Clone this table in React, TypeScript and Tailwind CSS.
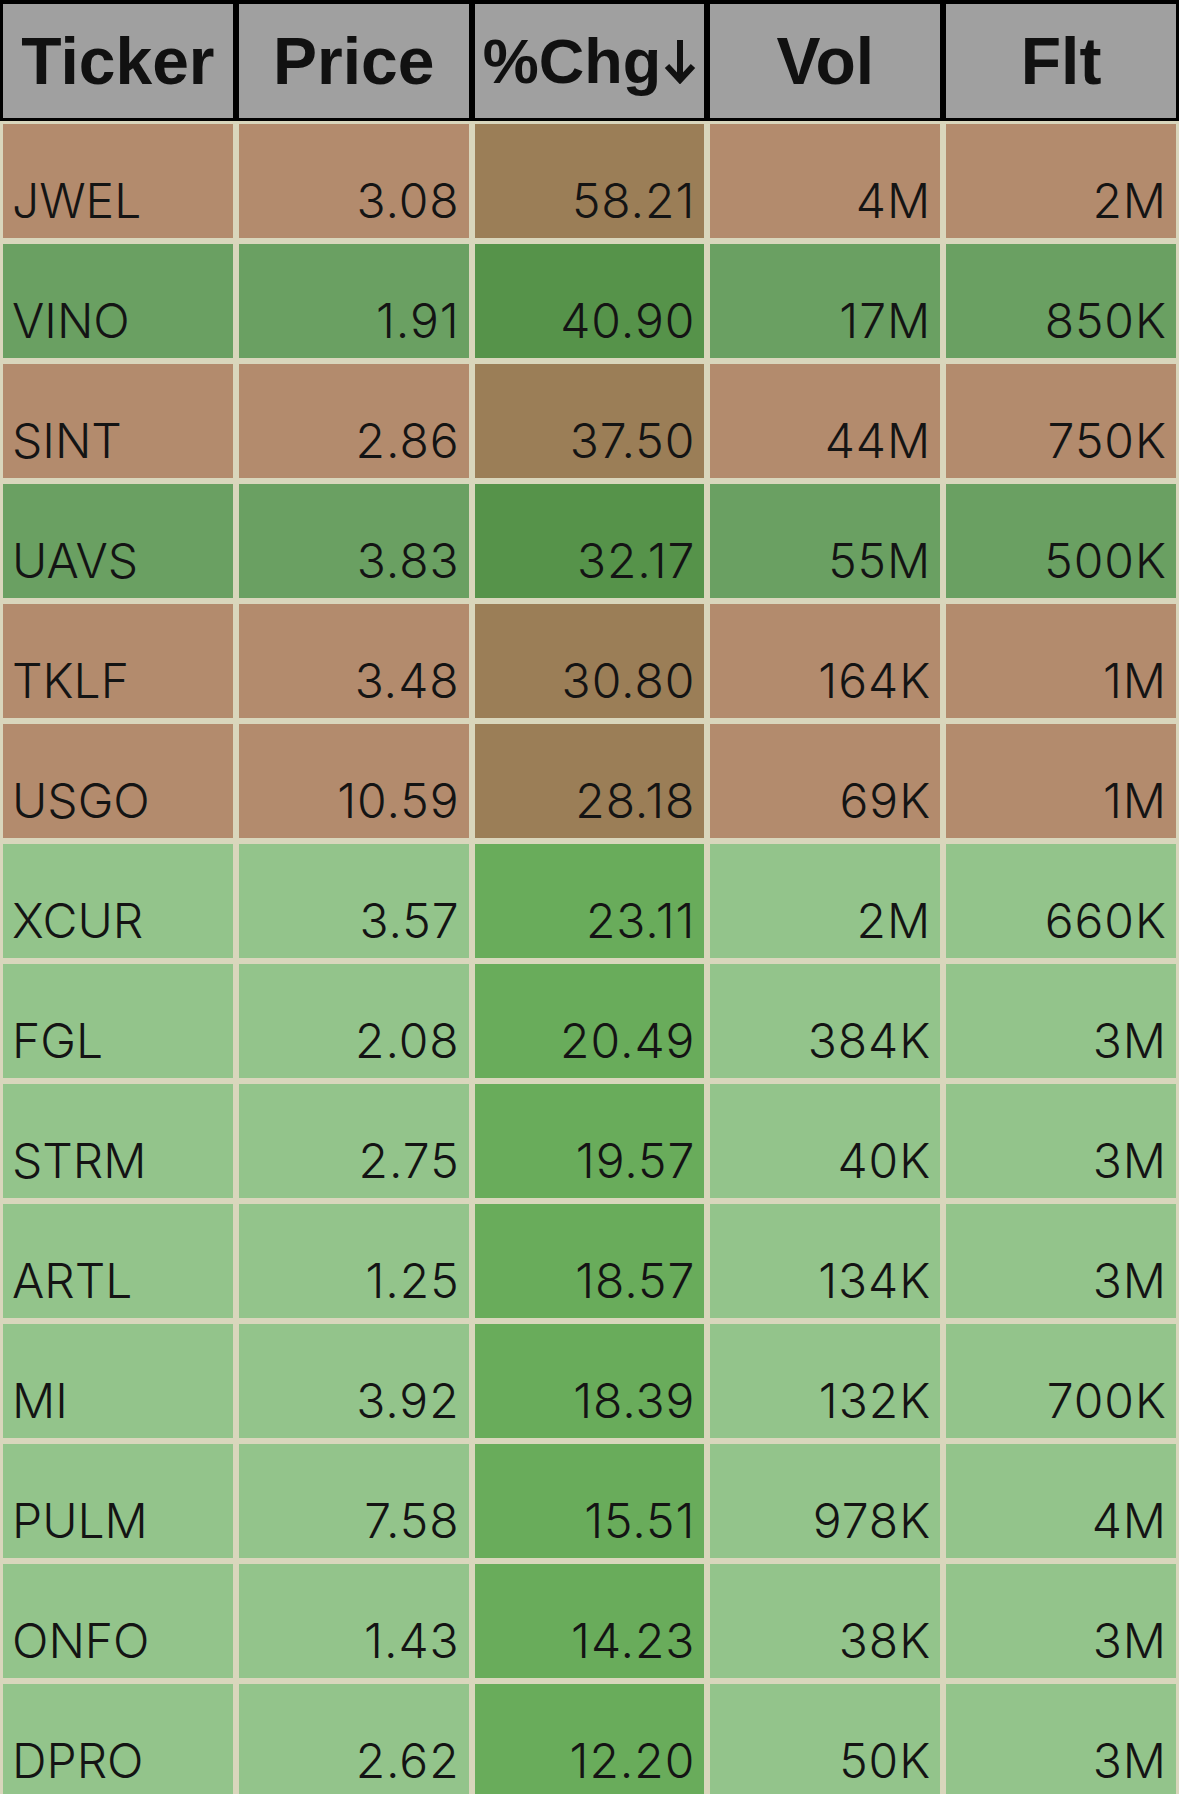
import React from "react";

type Tone = "red" | "dark" | "light";

interface Row {
  ticker: string;
  price: string;
  chg: string;
  vol: string;
  flt: string;
  tone: Tone;
}

const rows: Row[] = [
  { ticker: "JWEL", price: "3.08", chg: "58.21", vol: "4M", flt: "2M", tone: "red" },
  { ticker: "VINO", price: "1.91", chg: "40.90", vol: "17M", flt: "850K", tone: "dark" },
  { ticker: "SINT", price: "2.86", chg: "37.50", vol: "44M", flt: "750K", tone: "red" },
  { ticker: "UAVS", price: "3.83", chg: "32.17", vol: "55M", flt: "500K", tone: "dark" },
  { ticker: "TKLF", price: "3.48", chg: "30.80", vol: "164K", flt: "1M", tone: "red" },
  { ticker: "USGO", price: "10.59", chg: "28.18", vol: "69K", flt: "1M", tone: "red" },
  { ticker: "XCUR", price: "3.57", chg: "23.11", vol: "2M", flt: "660K", tone: "light" },
  { ticker: "FGL", price: "2.08", chg: "20.49", vol: "384K", flt: "3M", tone: "light" },
  { ticker: "STRM", price: "2.75", chg: "19.57", vol: "40K", flt: "3M", tone: "light" },
  { ticker: "ARTL", price: "1.25", chg: "18.57", vol: "134K", flt: "3M", tone: "light" },
  { ticker: "MI", price: "3.92", chg: "18.39", vol: "132K", flt: "700K", tone: "light" },
  { ticker: "PULM", price: "7.58", chg: "15.51", vol: "978K", flt: "4M", tone: "light" },
  { ticker: "ONFO", price: "1.43", chg: "14.23", vol: "38K", flt: "3M", tone: "light" },
  { ticker: "DPRO", price: "2.62", chg: "12.20", vol: "50K", flt: "3M", tone: "light" },
];

// base cell colour and the (darker) %Chg column colour per tone
const toneBg: Record<Tone, { cell: string; chg: string }> = {
  red: { cell: "bg-[#b38b6d]", chg: "bg-[#9b7e57]" },
  dark: { cell: "bg-[#6aa062]", chg: "bg-[#56934a]" },
  light: { cell: "bg-[#93c48b]", chg: "bg-[#69ac5b]" },
};

function SortArrow() {
  return (
    <svg viewBox="0 0 32 46" className="ml-[3px] h-[46px] w-[32px]" fill="none" stroke="#111" strokeWidth={6}>
      <path d="M16 2v40" />
      <path d="M3 28l13 14 13-14" strokeLinejoin="miter" />
    </svg>
  );
}

function HeaderCell({ children }: { children: React.ReactNode }) {
  return (
    <div className="flex h-[121px] items-center justify-center overflow-hidden border-[3px] border-t-4 border-black bg-[#a0a0a0]">
      {children}
    </div>
  );
}

function Cell({ children, bg, right }: { children: React.ReactNode; bg: string; right?: boolean }) {
  return (
    <div
      className={`flex h-[120px] items-end overflow-hidden border-[3px] border-[#d9d6bc] pb-[13px] ${bg} ${
        right ? "justify-end pr-[9px]" : "justify-start pl-[9px]"
      }`}
    >
      <span
        className={`whitespace-nowrap font-['Inter',sans-serif] text-[48px] font-light leading-none text-[#141414] ${
          right ? "tracking-[0.02em]" : ""
        }`}
      >
        {children}
      </span>
    </div>
  );
}

export default function App() {
  return (
    <div className="min-h-screen w-[1179px] overflow-hidden bg-[#d9d6bc] font-['Liberation_Sans',Arial,sans-serif]">
      {/* Header */}
      <div className="grid grid-cols-5 text-[#111]">
        <HeaderCell>
          <span className="whitespace-nowrap text-[66px] font-bold leading-none">Ticker</span>
        </HeaderCell>
        <HeaderCell>
          <span className="whitespace-nowrap text-[66px] font-bold leading-none">Price</span>
        </HeaderCell>
        <HeaderCell>
          <span className="flex items-center whitespace-nowrap text-[63px] font-bold leading-none">
            %Chg
            <SortArrow />
          </span>
        </HeaderCell>
        <HeaderCell>
          <span className="whitespace-nowrap text-[66px] font-bold leading-none">Vol</span>
        </HeaderCell>
        <HeaderCell>
          <span className="whitespace-nowrap text-[66px] font-bold leading-none">Flt</span>
        </HeaderCell>
      </div>

      {/* Rows */}
      {rows.map((r) => {
        const c = toneBg[r.tone];
        return (
          <div key={r.ticker} className="grid grid-cols-5">
            <Cell bg={c.cell}>{r.ticker}</Cell>
            <Cell bg={c.cell} right>
              {r.price}
            </Cell>
            <Cell bg={c.chg} right>
              {r.chg}
            </Cell>
            <Cell bg={c.cell} right>
              {r.vol}
            </Cell>
            <Cell bg={c.cell} right>
              {r.flt}
            </Cell>
          </div>
        );
      })}
    </div>
  );
}
